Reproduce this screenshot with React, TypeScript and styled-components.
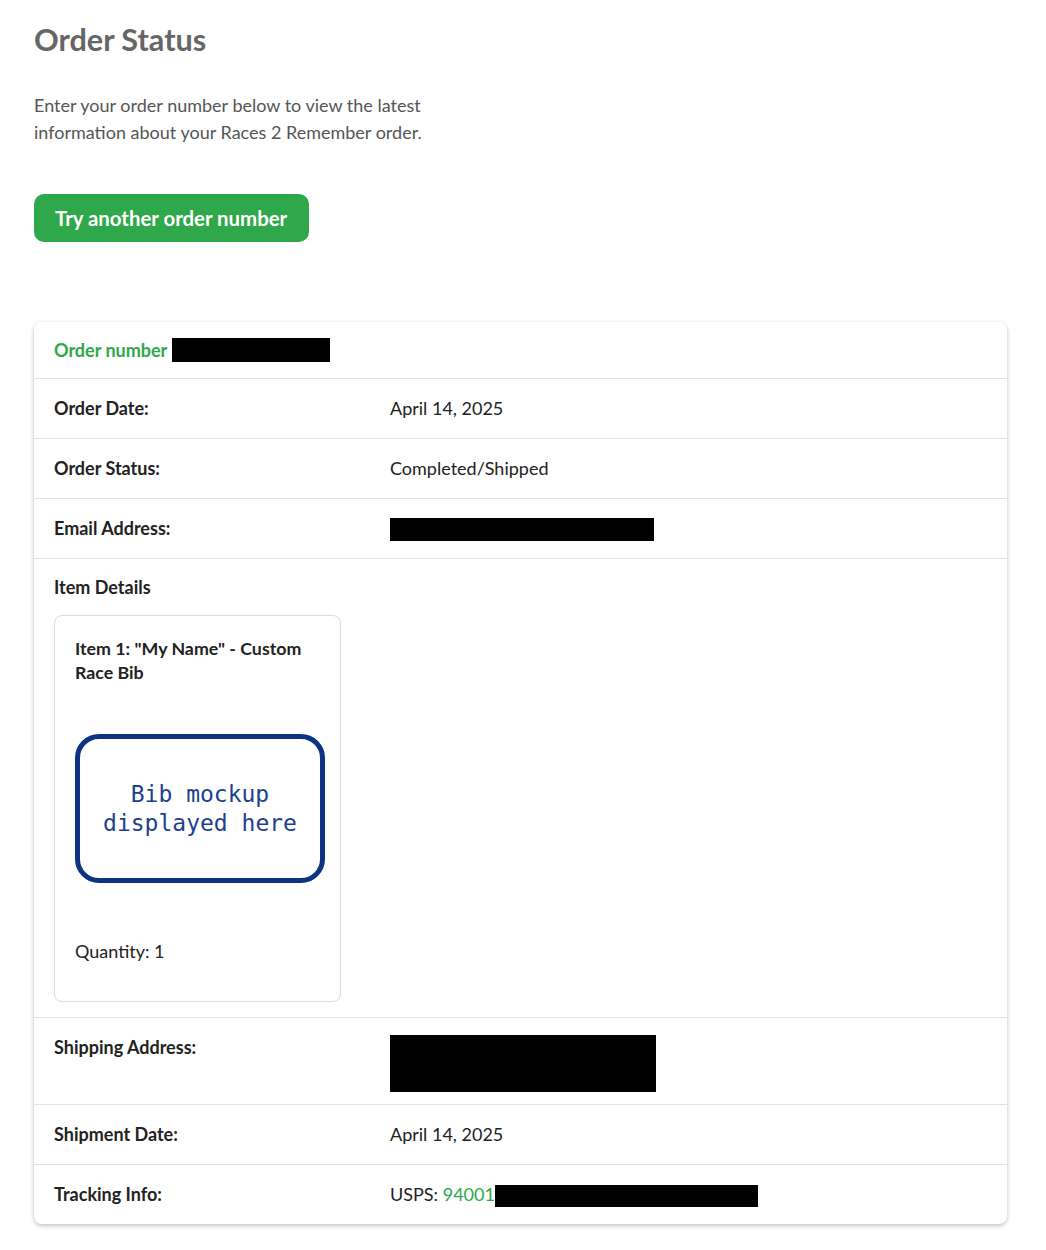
import styled, { createGlobalStyle } from "styled-components";

const GlobalStyle = createGlobalStyle`
  body {
    margin: 0;
    background: #fff;
    font-family: Lato, "Open Sans", sans-serif;
    color: #222;
  }
`;

const Page = styled.main`
  padding: 18px 39px 24px 34px;
`;

const Title = styled.h1`
  margin: 0;
  font-size: 30.6px;
  line-height: 44px;
  font-weight: 700;
  color: #666;
`;

const Intro = styled.p`
  margin: 30px 0 0;
  width: 420px;
  font-size: 18px;
  line-height: 27px;
  color: #555;
`;

const GreenButton = styled.button`
  margin-top: 48px;
  height: 48px;
  padding: 0 22px 0 21px;
  border: none;
  border-radius: 10px;
  background: #2ea84a;
  color: #fff;
  font-family: Lato, sans-serif;
  font-size: 20.4px;
  font-weight: 700;
  cursor: pointer;
`;

const Card = styled.section`
  margin-top: 80px;
  border-radius: 8px;
  background: #fff;
  box-shadow: 0 1px 4px rgba(0, 0, 0, 0.16), 0 3px 4px rgba(0, 0, 0, 0.1);
  overflow: hidden;
`;

const CardHeader = styled.div`
  padding: 16px 20px;
  height: 24px;
  display: flex;
  align-items: center;
  border-bottom: 1px solid #e2e2e2;
  font-size: 18px;
  font-weight: 700;
  color: #2ea84a;
`;

const Row = styled.div<{ $tall?: boolean }>`
  display: grid;
  grid-template-columns: 336px 1fr;
  align-items: start;
  padding: ${(p) => (p.$tall ? "19px 20px 12px" : "19px 20px 20px")};
  border-bottom: 1px solid #e2e2e2;
  font-size: 18px;
  line-height: 20px;

  &:last-child {
    border-bottom: none;
  }
`;

const Label = styled.div`
  font-weight: 700;
  color: #222;
`;

const Value = styled.div<{ $tall?: boolean }>`
  color: #222;
  height: ${(p) => (p.$tall ? "auto" : "20px")};
  margin-top: ${(p) => (p.$tall ? "-2px" : "0")};
`;

const Redacted = styled.span<{ $w: number; $h: number; $inline?: boolean }>`
  display: ${(p) => (p.$inline ? "inline-block" : "block")};
  vertical-align: middle;
  width: ${(p) => p.$w}px;
  height: ${(p) => p.$h}px;
  background: #000;
`;

const OrderNumberBox = styled(Redacted)`
  margin-left: 5px;
`;

const Link = styled.span`
  color: #2ea84a;
`;

const DetailsSection = styled.div`
  padding: 18px 20px 15px;
  border-bottom: 1px solid #e2e2e2;
`;

const SectionLabel = styled.div`
  font-size: 18px;
  line-height: 20px;
  font-weight: 700;
  margin-bottom: 18px;
`;

const ItemCard = styled.div`
  width: 245px;
  padding: 20px 20px 38px;
  border: 1px solid #dcdcdc;
  border-radius: 8px;
`;

const ItemTitle = styled.div`
  font-size: 17.8px;
  line-height: 24px;
  font-weight: 700;
  color: #222;
`;

const Bib = styled.div`
  margin-top: 50px;
  width: 240px;
  height: 139px;
  border: 5px solid #0c3480;
  border-radius: 24px;
  display: flex;
  align-items: center;
  justify-content: center;
  text-align: center;
  font-family: "DejaVu Sans Mono", "Liberation Mono", monospace;
  font-size: 23px;
  line-height: 29px;
  color: #1d3f8c;
`;

const Quantity = styled.div`
  margin-top: 56px;
  font-size: 18px;
  line-height: 24px;
  color: #222;
`;

const rows = [
  { label: "Order Date:", value: "April 14, 2025" },
  { label: "Order Status:", value: "Completed/Shipped" },
];

export default function App() {
  return (
    <>
      <GlobalStyle />
      <Page>
        <Title>Order Status</Title>
        <Intro>
          Enter your order number below to view the latest information about
          your Races 2 Remember order.
        </Intro>
        <GreenButton>Try another order number</GreenButton>

        <Card>
          <CardHeader>
            Order number
            <OrderNumberBox $w={158} $h={24} />
          </CardHeader>

          {rows.map((r) => (
            <Row key={r.label}>
              <Label>{r.label}</Label>
              <Value>{r.value}</Value>
            </Row>
          ))}

          <Row>
            <Label>Email Address:</Label>
            <Value>
              <Redacted $w={264} $h={23} />
            </Value>
          </Row>

          <DetailsSection>
            <SectionLabel>Item Details</SectionLabel>
            <ItemCard>
              <ItemTitle>Item 1: "My Name" - Custom Race Bib</ItemTitle>
              <Bib>
                Bib mockup
                <br />
                displayed here
              </Bib>
              <Quantity>Quantity: 1</Quantity>
            </ItemCard>
          </DetailsSection>

          <Row $tall>
            <Label>Shipping Address:</Label>
            <Value $tall>
              <Redacted $w={266} $h={57} />
            </Value>
          </Row>

          <Row>
            <Label>Shipment Date:</Label>
            <Value>April 14, 2025</Value>
          </Row>

          <Row>
            <Label>Tracking Info:</Label>
            <Value>
              USPS: <Link>94001</Link>
              <Redacted $w={263} $h={22} $inline />
            </Value>
          </Row>
        </Card>
      </Page>
    </>
  );
}
